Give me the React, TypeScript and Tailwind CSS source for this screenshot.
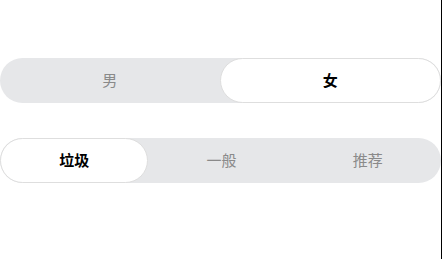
import React from "react";

function Seg({ items, active }: { items: string[]; active: number }) {
  return (
    <div className="flex h-[45px] w-[441px] rounded-full bg-[#e6e7e9]">
      {items.map((t, i) => (
        <div
          key={t}
          className={
            i === active
              ? "flex flex-1 items-center justify-center rounded-full border border-[#dedede] bg-white text-[15px] font-bold text-black"
              : "flex flex-1 items-center justify-center text-[15px] text-[#8a8a8a]"
          }
        >
          {t}
        </div>
      ))}
    </div>
  );
}

export default function App() {
  return (
    <div
      className="flex h-[259px] w-[442px] bg-white"
      style={{ fontFamily: '"Noto Sans CJK SC", "Noto Sans", sans-serif' }}
    >
      <div className="flex w-[441px] flex-col gap-[35px] pt-[58px]">
        <Seg items={["男", "女"]} active={1} />
        <Seg items={["垃圾", "一般", "推荐"]} active={0} />
      </div>
      <div className="h-full w-px bg-black" />
    </div>
  );
}
